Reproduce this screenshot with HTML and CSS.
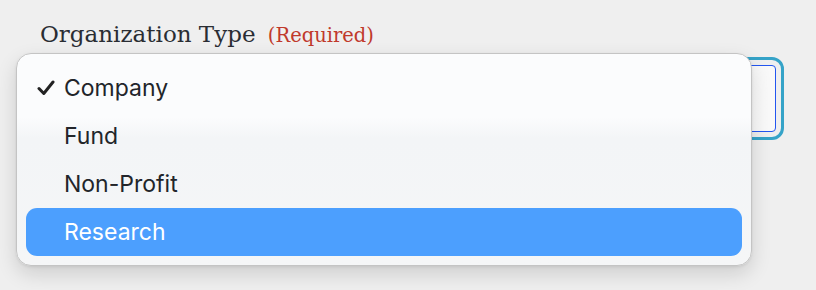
FILE: index.html
```html
<!DOCTYPE html>
<html>
<head>
    <meta charset="UTF-8">
    <title>Organization Type</title>
    <link rel="stylesheet" href="styles.css">
</head>
<body>
    <div class="field">
        <label class="field-label" for="org-type">Organization Type <span class="required">(Required)</span></label>
        <div class="select-wrap">
            <div class="select-box" id="org-type">
                <span class="select-value">Company</span>
            </div>
            <ul class="menu">
                <li class="menu-item checked">
                    <svg class="check" width="18" height="16" viewBox="0 0 18 16">
                        <path d="M2 8.5 L6.8 13.5 L16 2" fill="none" stroke="#222" stroke-width="3" stroke-linecap="round" stroke-linejoin="round"/>
                    </svg>
                    Company
                </li>
                <li class="menu-item">Fund</li>
                <li class="menu-item">Non-Profit</li>
                <li class="menu-item active">Research</li>
            </ul>
        </div>
    </div>
</body>
</html>
```

FILE: styles.css
```css
html, body {
    height: 100%;
}

body {
    margin: 0;
    background: #efefef;
    font-family: Inter, "Noto Sans", sans-serif;
    color: #222;
}

.field {
    padding: 21px 40px 0 40px;
}

.field-label {
    display: block;
    height: 26px;
    line-height: 26px;
    font-family: "DejaVu Serif", serif;
    font-size: 23px;
    color: #2a2d33;
}

.required {
    margin-left: 5px;
    font-size: 19.5px;
    color: #c0392b;
}

.select-wrap {
    position: relative;
    margin-top: 18px;
}

.select-box {
    height: 67px;
    margin-left: -8px;
    box-sizing: border-box;
    border: 1px solid #2356f0;
    border-radius: 4px;
    background: linear-gradient(90deg, #f4f4f4, #f9f9f9);
    outline: 3px solid #35a3c8;
    outline-offset: 5px;
}

.select-value {
    display: none;
}

.menu {
    position: absolute;
    left: -24px;
    top: -12px;
    width: 736px;
    margin: 0;
    padding: 10px 9px 9px;
    list-style: none;
    box-sizing: border-box;
    border: 1px solid #c4c4c4;
    border-radius: 15px;
    background: linear-gradient(180deg, #fbfcfd 0%, #fbfcfd 30%, #f3f5f7 40%, #f5f6f7 100%);
    box-shadow: 0 8px 20px rgba(0, 0, 0, 0.14), 0 1px 3px rgba(0, 0, 0, 0.08);
}

.menu-item {
    position: relative;
    height: 48px;
    line-height: 48px;
    padding-left: 38px;
    font-size: 23px;
    color: #22252a;
    border-radius: 11px;
}

.check {
    position: absolute;
    left: 11px;
    top: 16px;
}

.menu-item.active {
    background: #4c9ffe;
    color: #fff;
}
```
